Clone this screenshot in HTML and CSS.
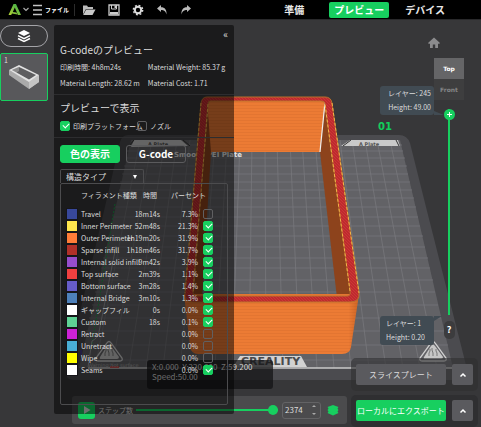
FILE: index.html
```html
<!DOCTYPE html>
<html lang="ja">
<head>
<meta charset="utf-8">
<meta name="viewport" content="width=device-width, initial-scale=1">
<title>G-codeのプレビュー</title>
<link rel="stylesheet" href="styles.css">
</head>
<body>
<header class="topbar">
  <button class="tool logo" aria-label="メニュー">
    <svg width="22" height="14" viewBox="0 0 22 14"><defs><linearGradient id="lg" x1="0" y1="1" x2="1" y2="0"><stop offset="0" stop-color="#b5d334"/><stop offset="1" stop-color="#2fa84a"/></linearGradient></defs><path d="M5.500 1H8L13 12H10L6.800 4.500L4.800 9L8.500 9.500L9.500 11.500L4 10.500L3.200 12H.5Z" fill="url(#lg)"/><path d="M15.500 5L18 7.500L20.500 5" fill="none" stroke="#aaa" stroke-width="1.200"/></svg>
  </button>
  <button class="tool file"><svg width="11" height="12" viewBox="0 0 11 12"><path d="M1 1.500H10M1 6H10M1 10.500H10" stroke="#c4c4c4" stroke-width="1.300"/></svg>ファイル</button>
  <span class="rule"></span>
  <button class="tool" aria-label="開く"><svg width="14" height="12" viewBox="0 0 14 12"><path d="M1 10.500V1.500H5L6 3H11V5H4Z" fill="#bbb"/><path d="M4.200 5.500H13.500L10.500 11H1.200Z" fill="#c8c8c8"/></svg></button>
  <button class="tool" aria-label="保存"><svg width="12" height="12" viewBox="0 0 12 12"><path d="M1 1H11V11H1Z" fill="none" stroke="#ccc" stroke-width="1.300"/><path d="M3.500 1V5H8.500V1" fill="none" stroke="#ccc"/><path d="M6.500 1.500H8V4H6.500ZM2 8H10V10.500H2Z" fill="#ccc"/></svg></button>
  <button class="tool" aria-label="設定"><svg width="12" height="12" viewBox="0 0 12 12"><circle cx="6" cy="6" r="3.200" fill="none" stroke="#ddd" stroke-width="2"/><circle cx="6" cy="6" r="4.700" fill="none" stroke="#ddd" stroke-width="1.400" stroke-dasharray="1.900 1.790"/></svg></button>
  <button class="tool" aria-label="元に戻す"><svg width="12" height="12" viewBox="0 0 12 12"><path d="M1 4.500L5 1V3.300C9 3.300 10.800 6 10.500 10.500C9.500 7 8 6 5 6V8Z" fill="#bbb"/></svg></button>
  <button class="tool" aria-label="やり直し"><svg width="12" height="12" viewBox="0 0 12 12"><path d="M11 4.500L7 1V3.300C3 3.300 1.200 6 1.500 10.500C2.500 7 4 6 7 6V8Z" fill="#bbb"/></svg></button>
  <nav class="tabs">
    <a href="#prepare">準備</a>
    <a href="#preview" class="active">プレビュー</a>
    <a href="#device">デバイス</a>
  </nav>
</header>

<main class="workspace">
  <svg class="scene" viewBox="0 20 481 407" preserveAspectRatio="xMidYMid slice" aria-hidden="true">
    <defs>
      <pattern id="layers" width="8" height="3" patternUnits="userSpaceOnUse"><rect width="8" height="3" fill="#ec7b34"/><path d="M0 .5H8" stroke="#df722f" stroke-width=".7"/></pattern>
      <pattern id="infill" width="3" height="3" patternUnits="userSpaceOnUse"><rect width="3" height="3" fill="#bd2c2e"/><path d="M0 0L3 3" stroke="#d03638" stroke-width=".9"/></pattern>
      <linearGradient id="side" x1="0" x2="1"><stop offset=".94" stop-color="#803000" stop-opacity="0"/><stop offset="1" stop-color="#803000" stop-opacity=".3"/></linearGradient>
    </defs>
    <path d="M128 135H399Q407 135 410 143L427 211L468 373Q469 380 461 380H74Q65 380 66 371L104 211L120 142Q122 135 128 135Z" fill="#4b4b4f"/>
    <path d="M131 140H400L453 368H79Z" fill="#626266"/>
    <path d="M140 140L95 368M152 140L112 368M165 140L129 368M177 140L146 368M190 140L163 368M202 140L180 368M215 140L198 368M227 140L215 368M240 140L232 368M252 140L249 368M265 140L266 368M277 140L283 368M290 140L300 368M302 140L317 368M315 140L334 368M327 140L351 368M340 140L369 368M352 140L386 368M365 140L403 368M377 140L420 368M390 140L437 368M129 145H402M127 151H403M126 158H405M124 166H407M122 174H408M120 182H410M119 190H412M117 198H414M115 207H416M113 217H418M111 226H420M108 236H423M106 247H425M103 258H428M101 268H430M98 280H433M95 292H435M92 305H438M89 318H441M86 331H444M83 345H448M80 360H451" stroke="#7a7a7e" stroke-width=".7" fill="none"/>
    <path d="M131 147L134 140H181L188 146ZM341 146L350 140H398L400 146Z" fill="#c9c9c9"/>
    <path d="M183 140L190 146M129 146L134 140M343 146L351 140M396 140L399 146" stroke="#333" fill="none"/>
    <text x="148" y="145.500" class="plate-name">A Plate</text>
    <text x="359" y="145.500" class="plate-name">A Plate</text>
    <text x="174" y="157" class="plate-type">Smooth PEI Plate</text>
    <text x="378" y="130" class="plate-no">01</text>
    <path d="M88 368H453" stroke="#cacaca" stroke-width="1.600"/>
    <path d="M115 204L91 350" stroke="#18a34a" stroke-dasharray="2 1.500"/>
    <path d="M116 246L99 332Q98 338 92 341L88 367" stroke="#99999d" fill="none"/>
    <path d="M81 350V355" stroke="#4530c0"/><path d="M110 367H119" stroke="#c33" stroke-width="1.500"/>
    <g id="warn"><path d="M431 343Q433 340 435 343L446 358Q447 361 444 361H422Q419 361 420 358Z" fill="#626266" stroke="#d0d0d0" stroke-width="1.300"/><path d="M431 346Q433 343 435 346L443 357Q443 359 441 359H425Q423 359 424 357Z" fill="#c6c6c6"/><path d="M429 356V353L430 351V349M433 356V353L432 350V348M437 356V353L436 351V349" stroke="#777" fill="none"/></g>
    <use href="#warn" x="-324"/>
    <text x="88" y="367" class="fine">Warning:hot surface</text>
    <path d="M240 356H301L307 367H233Z" fill="#d2d2d2"/>
    <text x="241" y="365" class="brand">CREALITY</text>
    <path d="M207 101H326L320 152H210Z" fill="url(#layers)"/>
    <path d="M326 101L320 152L337 298L352 298Z" fill="#8d431c"/>
    <path d="M207 101L211 152L202 298H191Z" fill="#8d431c"/>
    <path d="M325 102L320 152" stroke="#eee" stroke-width="1.200"/>
    <path d="M184 294L190 346Q191 354 198 354H342Q350 354 351 347L359 294Z" fill="url(#layers)"/>
    <path d="M184 294L190 346Q191 354 198 354H342Q350 354 351 347L359 294Z" fill="url(#side)"/>
    <path d="M207 97H325Q331 97 332 103L359 293Q360 302 350 302H193Q184 302 185 293L201 103Q202 97 207 97ZM210 101Q208 101 208 104L193 293Q193 296 196 296H347Q351 296 350 291L325 104Q325 101 321 101Z" fill="url(#infill)" fill-rule="evenodd"/>
    <path d="M207 97H325Q331 97 332 103L359 293Q360 302 350 302H193Q184 302 185 293L201 103Q202 97 207 97Z" class="wall"/>
    <path d="M210 101Q208 101 208 104L193 293Q193 296 196 296H347Q351 296 350 291L325 104Q325 101 321 101Z" class="wall"/>
    <path d="M332 103L359 293M350 291L325 104M201 103L185 293M208 104L193 293" class="dashes"/>
  </svg>

  <aside class="plates">
    <button class="stack" aria-label="プレート一覧"><svg width="14" height="14" viewBox="0 0 14 14"><path d="M7 1L13 4L7 7L1 4Z" fill="#fff"/><path d="M1 6.700L7 9.700L13 6.700M1 9.500L7 12.500L13 9.500" fill="none" stroke="#fff" stroke-width="1.500"/></svg></button>
    <button class="plate"><span>1</span><svg width="32" height="26" viewBox="0 0 32 26"><path d="M1 6V11L21 25L31 18V11L21 17Z" fill="#aaa"/><path d="M21 18V25L31 18V11Z" fill="#c4c4c4"/><path d="M4 6L11 3L28 11L21 15Z" fill="#5e5e60"/><path d="M4 6L11 3V7L8 9Z" fill="#8a8a8a"/><path d="M1 6L11 1L31 11L21 18ZM4 6L21 15.500L28 11L11 3Z" fill="#e2e2e2" fill-rule="evenodd"/></svg></button>
  </aside>

  <div class="dock">
    <button class="play" aria-label="再生"><svg width="8" height="8" viewBox="0 0 8 8"><path d="M1 0L7.500 4L1 8Z" fill="#ddd"/></svg></button>
    <label for="step">ステップ数</label>
    <input id="step" class="step-range" type="range" min="0" max="2374" value="2374">
    <span class="stepper"><input type="number" value="2374" aria-label="ステップ"><svg width="6" height="12" viewBox="0 0 6 12"><path d="M1 3L3 1L5 3ZM1 9L3 11L5 9Z" fill="#aaa"/></svg></span>
    <svg class="dock-icon" width="12" height="12" viewBox="0 0 12 12"><path d="M6 1L11.500 3L10.500 4.500L11.500 6L10.500 7.500L11.500 9L6 11.500L.5 9L1.500 7.500L.5 6L1.500 4.500L.5 3Z" fill="#17cf5f"/></svg>
  </div>

  <div class="readout">X:0.000&nbsp; Y:220.000&nbsp; Z:59.200<br>Speed:50.00</div>

  <section class="panel">
    <div class="block summary">
      <button class="collapse" aria-label="折りたたむ">«</button>
      <h2>G-codeのプレビュー</h2>
      <div class="facts">
        <span>印刷時間: 4h8m24s</span><span>Material Weight: 85.37 g</span>
        <span>Material Length: 28.62 m</span><span>Material Cost: 1.71</span>
      </div>
    </div>
    <div class="block display">
      <h2>プレビューで表示</h2>
      <div class="checks">
        <input type="checkbox" id="c-plat" checked><label for="c-plat">印刷プラットフォーム</label>
        <input type="checkbox" id="c-noz"><label for="c-noz">ノズル</label>
      </div>
    </div>
    <div class="block colors">
      <div class="modes"><button class="on">色の表示</button><button>G-code</button></div>
      <div class="pick"><select aria-label="表示タイプ"><option>構造タイプ</option></select></div>
      <div class="frame">
        <table>
          <colgroup><col class="w-swatch"><col class="w-name"><col class="w-time"><col class="w-share"><col class="w-check"></colgroup>
          <thead><tr><th></th><th>フィラメント種類</th><th class="time">時間</th><th class="share" colspan="2">パーセント</th></tr></thead>
          <tbody>
            <tr><td><i class="sw travel"></i></td><td>Travel</td><td>18m14s</td><td>7.3%</td><td><input type="checkbox" aria-label="Travel"></td></tr>
            <tr><td><i class="sw inner"></i></td><td>Inner Perimeter</td><td>52m48s</td><td>21.3%</td><td><input type="checkbox" aria-label="Inner Perimeter" checked></td></tr>
            <tr><td><i class="sw outer"></i></td><td>Outer Perimeter</td><td>1h19m20s</td><td>31.9%</td><td><input type="checkbox" aria-label="Outer Perimeter" checked></td></tr>
            <tr><td><i class="sw sparse"></i></td><td>Sparse infill</td><td>1h18m46s</td><td>31.7%</td><td><input type="checkbox" aria-label="Sparse infill" checked></td></tr>
            <tr><td><i class="sw solid"></i></td><td>Internal solid infill</td><td>9m42s</td><td>3.9%</td><td><input type="checkbox" aria-label="Internal solid infill" checked></td></tr>
            <tr><td><i class="sw top"></i></td><td>Top surface</td><td>2m39s</td><td>1.1%</td><td><input type="checkbox" aria-label="Top surface" checked></td></tr>
            <tr><td><i class="sw bottom"></i></td><td>Bottom surface</td><td>3m28s</td><td>1.4%</td><td><input type="checkbox" aria-label="Bottom surface" checked></td></tr>
            <tr><td><i class="sw bridge"></i></td><td>Internal Bridge</td><td>3m10s</td><td>1.3%</td><td><input type="checkbox" aria-label="Internal Bridge" checked></td></tr>
            <tr><td><i class="sw gap"></i></td><td>ギャップフィル</td><td>0s</td><td>0.0%</td><td><input type="checkbox" aria-label="ギャップフィル" checked></td></tr>
            <tr><td><i class="sw custom"></i></td><td>Custom</td><td>18s</td><td>0.1%</td><td><input type="checkbox" aria-label="Custom" checked></td></tr>
            <tr><td><i class="sw retract"></i></td><td>Retract</td><td></td><td>0.0%</td><td><input type="checkbox" aria-label="Retract"></td></tr>
            <tr><td><i class="sw unretract"></i></td><td>Unretract</td><td></td><td>0.0%</td><td><input type="checkbox" aria-label="Unretract"></td></tr>
            <tr><td><i class="sw wipe"></i></td><td>Wipe</td><td></td><td>0.0%</td><td><input type="checkbox" aria-label="Wipe"></td></tr>
            <tr><td><i class="sw seams"></i></td><td>Seams</td><td></td><td>0.0%</td><td><input type="checkbox" aria-label="Seams" checked></td></tr>
          </tbody>
        </table>
      </div>
    </div>
  </section>

  <div class="rail">
    <button class="home" aria-label="ホーム"><svg width="12" height="12" viewBox="0 0 12 12"><path d="M6 .5L12 6L11 7L10 6.500V11H7.200V7.500H4.800V11H2V6.500L1 7L0 6Z" fill="#8b8b8d"/></svg></button>
    <div class="tags">
      <div class="tag upper">レイヤー: 245<br>Height: 49.00</div>
      <div class="tag lower">レイヤー: 1<br>Height: 0.20</div>
    </div>
    <div class="track">
      <button class="face">Top</button>
      <button class="face front">Front</button>
      <input class="layer-range" type="range" min="1" max="245" value="245" aria-label="レイヤー">
      <button class="help" aria-label="ヘルプ">?</button>
    </div>
  </div>

  <div class="actions">
    <div class="pair"><button class="main">スライスプレート</button><button class="more" aria-label="その他のスライス"><svg width="8" height="6" viewBox="0 0 8 6"><path d="M1.500 4.500L4 2L6.500 4.500" fill="none" stroke="#fff" stroke-width="1.500"/></svg></button></div>
    <div class="pair solid-bg"><button class="main go">ローカルにエクスポート</button><button class="more" aria-label="その他の出力"><svg width="8" height="6" viewBox="0 0 8 6"><path d="M1.500 4.500L4 2L6.500 4.500" fill="none" stroke="#fff" stroke-width="1.500"/></svg></button></div>
  </div>
</main>
</body>
</html>
```
FILE: styles.css
```css
* { box-sizing: border-box; }

:root {
  --green: #17cf5f;
  --text: #dcdcdc;
  --line: #5b5b5d;
}

body {
  margin: 0;
  min-height: 100vh;
  display: flex;
  flex-direction: column;
  background: #373739;
  color: var(--text);
  font: 7px/10px "Noto Sans CJK JP", sans-serif;
}

button, input, select { font: inherit; color: inherit; margin: 0; }
button { padding: 0; border: 0; background: none; display: flex; align-items: center; justify-content: center; }
svg { display: block; flex: none; }
h2 { margin: 0; font-size: 10px; line-height: 14px; font-weight: 400; }

.topbar { display: flex; align-items: center; height: 20px; padding-left: 8px; background: #000; border-bottom: 1px solid #29292b; }
.tool { margin-right: 12px; }
.logo { margin-right: 2px; }
.file { gap: 2px; margin-right: 5px; font-size: 6px; font-weight: 700; color: #fff; }
.rule { width: 1px; height: 12px; margin-right: 7px; background: #2c2c2c; }
.tabs { display: flex; gap: 16px; margin-left: auto; padding-right: 36px; font-size: 10px; font-weight: 700; line-height: 16px; }
.tabs a { color: #e8e8e8; text-decoration: none; }
.tabs a:first-child { margin-right: 9px; }
.tabs .active { padding: 0 5px; border-radius: 2px; background: var(--green); color: #fff; }

.workspace {
  position: relative;
  flex: 1;
  display: grid;
  grid-template-columns: 50px 180px 1fr 127px;
  grid-template-rows: 1fr auto;
  column-gap: 4px;
  padding: 5px 3px 0 0;
}
.workspace > * { position: relative; }
.workspace > .scene { position: absolute; inset: 0; width: 100%; height: 100%; }

.plate-name { font: 700 5px "DejaVu Sans", sans-serif; fill: #555; }
.plate-type { font: 700 7px "DejaVu Sans", sans-serif; fill: #e4e4e4; }
.plate-no { font: 700 10px "DejaVu Sans", sans-serif; fill: #12cf5c; }
.brand { font: 700 11px "DejaVu Sans", sans-serif; fill: #4a4a4c; }
.fine { font: 5px "DejaVu Sans", sans-serif; fill: #aaa; }
.wall { fill: none; stroke: #b8702c; }
.dashes { fill: none; stroke: #f2b548; stroke-dasharray: 3 2; }

.plates { grid-area: 1 / 1; padding-right: 2px; }
.stack { width: 100%; height: 22px; margin-bottom: 6px; border: 1px solid #a4a4a8; border-radius: 11px; }
.plate { position: relative; width: 100%; height: 48px; border: 1px solid var(--green); border-radius: 2px; background: #58585b; }
.plate span { position: absolute; top: 1px; left: 3px; }

.panel {
  grid-area: 1 / 2 / 3 / 3;
  display: flex;
  flex-direction: column;
  margin-bottom: 13px;
  border-radius: 2px;
  background: rgba(0, 0, 0, .5);
}
.block { padding: 0 6px; }
.summary, .display { border-bottom: 1px solid #2d2d2f; }
.summary { height: 70px; }
.collapse { height: 18px; margin-left: auto; font-size: 10px; }
.facts { display: grid; grid-template-columns: auto auto; justify-content: start; column-gap: 8px; row-gap: 6px; padding-top: 5px; white-space: nowrap; }
.display { height: 43px; padding-top: 6px; }
.checks { display: flex; align-items: center; padding-top: 6px; white-space: nowrap; }
.checks label { padding-left: 3px; }
.checks label:first-of-type { width: 67px; }

input[type="checkbox"] { appearance: none; position: relative; flex: none; display: block; width: 10px; height: 10px; border: 1px solid #606062; border-radius: 2px; }
input[type="checkbox"]:checked { border-color: var(--green); background: var(--green); }
input[type="checkbox"]:checked::after { content: ""; position: absolute; left: 2px; top: 1px; width: 5px; height: 3px; border: solid #fff; border-width: 0 0 1px 1px; transform: rotate(-45deg); }

.colors { flex: 1; display: flex; flex-direction: column; padding-top: 7px; padding-bottom: 9px; }
.modes { display: flex; gap: 6px; margin-bottom: 6px; }
.modes button { width: 60px; height: 18px; border: 1px solid var(--line); border-radius: 3px; font-size: 10px; font-weight: 700; color: #fff; }
.modes .on { background: var(--green); border-color: var(--green); }
.pick { position: relative; width: 84px; height: 14px; border: 1px solid #4c4c4e; border-bottom: 0; border-radius: 2px 2px 0 0; }
.pick::after { content: ""; position: absolute; right: 6px; top: 5px; border: solid transparent; border-width: 4px 2px 0; border-top-color: #fff; }
.pick select { appearance: none; display: block; width: 100%; height: 100%; padding: 0 5px; border: 0; background: none; font-size: 8px; line-height: 12px; }
.frame { flex: 1; padding: 5px 6px; border: 1px solid #4c4c4e; border-radius: 2px; }

table { width: 146px; table-layout: fixed; border-collapse: collapse; white-space: nowrap; }
th, td { height: 12px; padding: 0; text-align: left; font-weight: 400; line-height: 10px; }
thead th { height: 19px; padding-bottom: 7px; }
.w-swatch { width: 14px; }
.w-name { width: 45px; }
.w-time { width: 34px; }
.w-share { width: 38px; }
.w-check { width: 15px; }
th.time { padding-right: 3px; text-align: right; }
th.share { padding-left: 11px; }
td:nth-child(3), td:nth-child(4) { text-align: right; }
td input { margin-left: auto; }
.sw { display: block; width: 12px; height: 12px; margin-left: -1px; border: 1px solid #16161a; }
.travel { background: #38489b; }
.inner { background: #ffe64d; }
.outer { background: #ff7d38; }
.sparse { background: #b03029; }
.solid { background: #964dcc; }
.top { background: #f04040; }
.bottom { background: #665cc8; }
.bridge { background: #4d80ba; }
.gap, .seams { background: #fff; }
.custom { background: #5ed194; }
.retract { background: #cd22d6; }
.unretract { background: #49aed4; }
.wipe { background: #ff0; }

.dock {
  grid-area: 2 / 2 / 3 / 4;
  display: flex;
  align-items: center;
  height: 28px;
  margin: 0 0 3px 18px;
  padding: 0 8px 0 6px;
  border-radius: 3px;
  background: #4b4b4d;
}
.play { width: 17px; height: 17px; margin-right: 3px; border-radius: 3px; background: var(--green); }
.step-range { appearance: none; flex: 1; min-width: 0; height: 10px; margin: 0 4px 0 3px; background: linear-gradient(var(--green), var(--green)) center / 100% 2px no-repeat; }
.step-range::-webkit-slider-thumb { appearance: none; width: 10px; height: 10px; border-radius: 50%; background: var(--green); }
.stepper { display: flex; align-items: center; width: 39px; height: 17px; margin-right: 6px; padding: 0 3px 0 2px; border: 1px solid #636365; border-radius: 3px; }
.stepper input { appearance: textfield; flex: 1; width: 0; min-width: 0; padding: 0; border: 0; background: none; font-size: 8px; }
.stepper input::-webkit-inner-spin-button { display: none; }

.readout {
  grid-area: 1 / 2 / 2 / 4;
  place-self: end start;
  width: 126px;
  height: 29px;
  margin: 0 0 7px 93px;
  padding: 2px 5px;
  border-radius: 3px;
  background: rgba(20, 20, 22, .75);
  color: #d4d4d4;
  font-size: 8px;
  white-space: nowrap;
}

.rail { grid-area: 1 / 4; display: grid; grid-template-columns: 54px 30px; grid-template-rows: 33px 1fr; justify-content: end; margin: 0 14px 51px 0; }
.home { grid-area: 1 / 1 / 2 / 3; place-self: center; margin: 3px 0 0 24px; }
.tags { grid-area: 2 / 1; display: flex; flex-direction: column; justify-content: space-between; padding-top: 28px; }
.tag { position: relative; height: 29px; padding: 0 6px; border-radius: 3px; background: #414b53; line-height: 14px; white-space: nowrap; }
.tag::after { content: ""; position: absolute; left: 100%; border: solid transparent; }
.upper { padding-right: 3px; text-align: right; }
.upper::after { bottom: 0; border-width: 4px 0 0 10px; border-left-color: #414b53; }
.lower::after { top: 0; border-width: 0 0 5px 8px; border-left-color: #414b53; }
.track { grid-area: 2 / 2; display: flex; flex-direction: column; align-items: center; }
.face { width: 30px; height: 21px; background: #656567; color: #fff; font: 700 6px "DejaVu Sans", sans-serif; }
.front { background: #3e3e3f; color: #858587; }
.layer-range { appearance: none; flex: 1; min-height: 0; width: 12px; margin: 9px 0 6px; writing-mode: vertical-lr; direction: rtl; background: linear-gradient(var(--green), var(--green)) center / 2px 100% no-repeat; }
.layer-range::-webkit-slider-thumb {
  appearance: none;
  width: 11px;
  height: 11px;
  border-radius: 50%;
  background: linear-gradient(#fff, #fff) center / 5px 1px no-repeat, linear-gradient(#fff, #fff) center / 1px 5px no-repeat, var(--green);
}
.help { width: 11px; height: 18px; margin-bottom: 6px; border-radius: 5px; background: #3c3c3e; color: #fff; font-size: 9px; font-weight: 700; }

.actions { grid-area: 1 / 4 / 3 / 5; align-self: end; display: grid; row-gap: 4px; }
.pair { display: flex; gap: 6px; padding: 6px 5px; height: 33px; border-radius: 5px; background: rgba(47, 47, 49, .6); }
.solid-bg { background: #2f2f31; height: 32px; padding-top: 5px; }
.pair button { height: 21px; border-radius: 2px; background: #5a5a5e; }
.pair .main { flex: 1; font-size: 8px; white-space: nowrap; }
.pair .go { background: var(--green); color: #fff; }
.pair .more { width: 21px; }
```
